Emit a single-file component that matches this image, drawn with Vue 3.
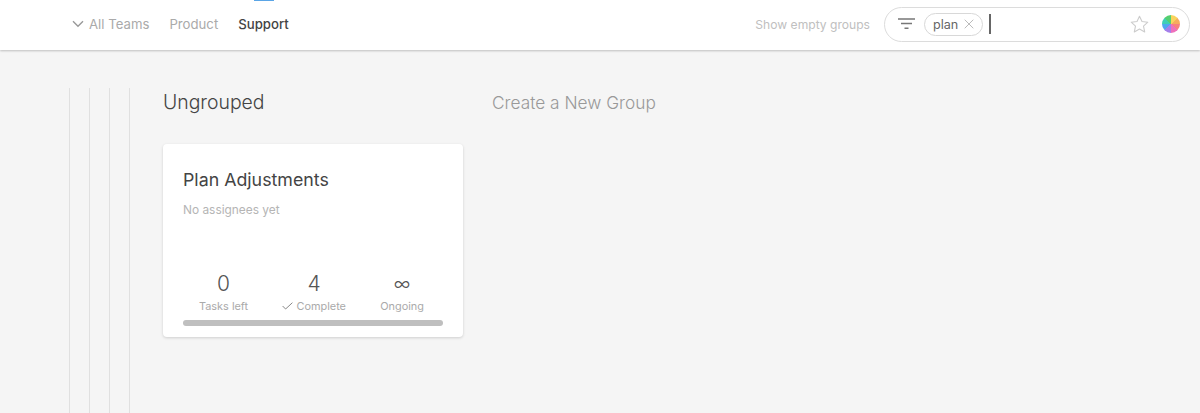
<template>
  <div class="page">
    <header class="topbar">
      <span class="tab-marker"></span>
      <nav class="teams">
        <a class="team muted">
          <svg class="chevron" width="12" height="8" viewBox="0 0 12 8"><path d="M1 1.2l5 5 5-5" fill="none" stroke="#999" stroke-width="1.4" /></svg>
          All Teams
        </a>
        <a class="team muted">Product</a>
        <a class="team active">Support</a>
      </nav>
      <div class="tools">
        <span class="show-empty">Show empty groups</span>
        <div class="search">
          <svg class="filter" width="18" height="12" viewBox="0 0 18 12">
            <path d="M0 1h17M3 5.5h11M6.5 10.2h4" fill="none" stroke="#777" stroke-width="1.5" />
          </svg>
          <span class="chip">
            plan
            <svg width="10" height="10" viewBox="0 0 10 10"><path d="M.7.7l8.6 8.6M9.3.7L.7 9.3" stroke="#bbb" stroke-width="1" fill="none" /></svg>
          </span>
          <span class="caret"></span>
          <svg class="star" width="19" height="18" viewBox="0 0 19 18">
            <path d="M9.5 1.2l2.5 5.3 5.8.7-4.3 4 1.2 5.7-5.2-2.9-5.2 2.9 1.2-5.7-4.3-4 5.8-.7z" fill="none" stroke="#ccc" stroke-width="1.1" stroke-linejoin="round" />
          </svg>
          <span class="wheel"></span>
        </div>
      </div>
    </header>

    <main class="board">
      <div class="guides">
        <span v-for="n in 4" :key="n" class="guide"></span>
      </div>
      <section class="group">
        <h2 class="group-title">Ungrouped</h2>
        <article class="card">
          <h3 class="card-title">Plan Adjustments</h3>
          <p class="assignees">No assignees yet</p>
          <div class="stats">
            <div v-for="s in stats" :key="s.label" class="stat">
              <div class="value" :class="{ infinite: s.value === '∞' }">{{ s.value }}</div>
              <div class="label">
                <svg v-if="s.check" width="11" height="8" viewBox="0 0 11 8"><path d="M.6 4l3 3L10.4.7" fill="none" stroke="#888" stroke-width="1" /></svg>
                {{ s.label }}
              </div>
            </div>
          </div>
          <div class="progress"></div>
        </article>
      </section>
      <h2 class="new-group">Create a New Group</h2>
    </main>
  </div>
</template>

<script setup>
const stats = [
  { value: '0', label: 'Tasks left' },
  { value: '4', label: 'Complete', check: true },
  { value: '∞', label: 'Ongoing' }
]
</script>

<style>
html, body {
  margin: 0;
  background: #f5f5f5;
}
</style>

<style scoped>
.page {
  height: 413px;
  overflow: hidden;
  background: #f5f5f5;
  font-family: Inter, "Liberation Sans", sans-serif;
  color: #444;
}
.topbar {
  position: relative;
  height: 50px;
  box-sizing: border-box;
  background: #fff;
  box-shadow: 0 1px 2px rgba(0,0,0,0.22);
  display: flex;
  justify-content: space-between;
  align-items: center;
  padding: 0 10px 2px 72px;
}
.tab-marker {
  position: absolute;
  left: 254px;
  top: 0;
  width: 20px;
  height: 1px;
  background: #5aa5e6;
}
.teams {
  display: flex;
  gap: 20px;
  font-size: 13.2px;
}
.team {
  display: flex;
  align-items: center;
}
.chevron {
  margin-right: 5px;
}
.muted {
  color: #aaa;
}
.active {
  color: #444;
  font-weight: 500;
}
.tools {
  display: flex;
  align-items: center;
  gap: 14px;
}
.show-empty {
  font-size: 12.1px;
  color: #c0c0c0;
}
.search {
  width: 306px;
  height: 35px;
  box-sizing: border-box;
  border: 1px solid #dcdcdc;
  border-radius: 18px;
  display: flex;
  align-items: center;
  padding: 0 9px 0 13px;
}
.filter {
  margin-right: 8px;
}
.chip {
  height: 23px;
  box-sizing: border-box;
  border: 1px solid #d8d8d8;
  border-radius: 12px;
  display: flex;
  align-items: center;
  gap: 6px;
  padding: 0 8px;
  font-size: 12.6px;
  color: #666;
}
.caret {
  width: 1.5px;
  height: 20px;
  margin-left: 6px;
  background: #666;
}
.star {
  margin-left: auto;
  margin-right: 13px;
}
.wheel {
  width: 18px;
  height: 18px;
  border-radius: 50%;
  background: conic-gradient(#f8d35e 0 45deg, #f7ab5e 45deg 90deg, #f7807f 90deg 135deg, #ee70bc 135deg 180deg, #a47fea 180deg 225deg, #4fa8ee 225deg 270deg, #3fcfb5 270deg 315deg, #55cf70 315deg 360deg);
}
.board {
  display: flex;
  align-items: flex-start;
  padding: 38px 0 0 69px;
  height: 363px;
  box-sizing: border-box;
}
.guides {
  display: flex;
  height: 400px;
  width: 94px;
  flex: none;
}
.guide {
  width: 20px;
  box-sizing: border-box;
  border-left: 1px solid #e0e0e0;
}
.group {
  width: 300px;
  margin-right: 29px;
  flex: none;
}
.group-title {
  margin: 2px 0 30px;
  font-size: 19.4px;
  line-height: 24px;
  font-weight: 300;
  color: #444;
}
.new-group {
  margin: 3px 0 0;
  font-size: 17.3px;
  line-height: 24px;
  font-weight: 300;
  color: #999;
}
.card {
  height: 193px;
  box-sizing: border-box;
  background: #fff;
  border-radius: 4px;
  box-shadow: 0 1px 3px rgba(0,0,0,0.16);
  padding: 24px 20px 0;
}
.card-title {
  margin: 0;
  font-size: 17.8px;
  line-height: 24px;
  font-weight: 400;
  color: #444;
}
.assignees {
  margin: 9px 0 0;
  font-size: 11.9px;
  line-height: 18px;
  color: #b5b5b5;
}
.stats {
  display: flex;
  justify-content: space-between;
  margin-top: 51px;
  padding: 0 19px 0 16px;
}
.stat {
  text-align: center;
}
.value {
  font-size: 21px;
  line-height: 28px;
  font-weight: 300;
  color: #555;
}
.infinite {
  font-size: 18px;
}
.label {
  font-size: 10.9px;
  line-height: 16px;
  color: #aaa;
}
.progress {
  height: 6px;
  margin-top: 6px;
  border-radius: 3px;
  background: #bfbfbf;
}
</style>
